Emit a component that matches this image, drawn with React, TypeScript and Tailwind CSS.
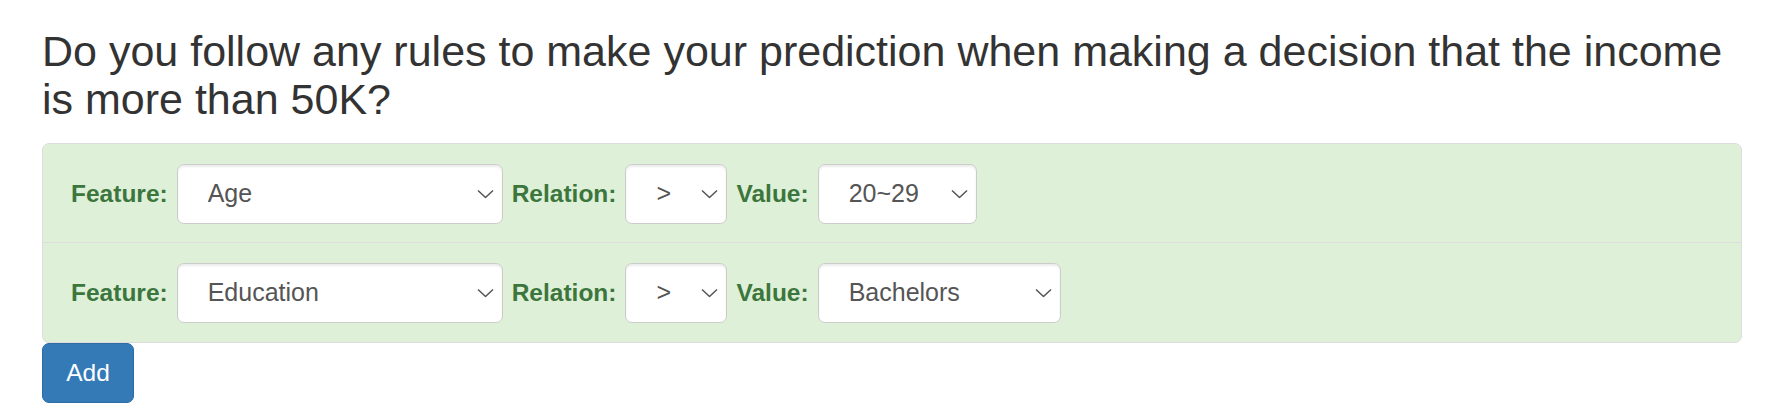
import React from 'react'

type Rule = {
  feature: string
  relation: string
  value: string
  valueWidth: string
}

const rules: Rule[] = [
  { feature: 'Age', relation: '>', value: '20~29', valueWidth: 'w-[159px]' },
  { feature: 'Education', relation: '>', value: 'Bachelors', valueWidth: 'w-[243px]' },
]

function Select({ value, className }: { value: string; className: string }) {
  return (
    <div className={`relative h-[60px] shrink-0 ${className}`}>
      <select
        defaultValue={value}
        className="h-full w-full appearance-none rounded-[7px] border border-[#ccc] bg-white pl-[30px] pr-[30px] text-[25px] text-[#555] shadow-[inset_0_2px_2px_rgba(0,0,0,0.075)] outline-none"
      >
        <option>{value}</option>
      </select>
      <svg
        className="pointer-events-none absolute right-[9px] top-1/2 -translate-y-1/2"
        width="17"
        height="9"
        viewBox="0 0 17 9"
      >
        <polyline points="1,1 8.5,8 16,1" fill="none" stroke="#555" strokeWidth="1.5" />
      </svg>
    </div>
  )
}

function Label({ children }: { children: React.ReactNode }) {
  return <label className="shrink-0 text-[24.5px] font-bold text-[#3c763d]">{children}</label>
}

export default function App() {
  return (
    <div className="min-h-screen bg-white pl-[42px] pr-[40px] font-['Liberation_Sans',Arial,sans-serif]">
      <h3 className="pt-[27px] pb-[20px] text-[43px] leading-[48px] font-normal text-[#333]">
        Do you follow any rules to make your prediction when making a decision that the income is more than 50K?
      </h3>

      <div className="rounded-[7px] border border-[#ddd] bg-[#dff0d8]">
        {rules.map((rule, i) => (
          <div
            key={i}
            className={`flex items-center gap-[9px] pl-[28px] ${
              i === 0 ? 'pt-[20px] pb-[18px]' : 'border-t border-[#ddd] pt-[20px] pb-[19px]'
            }`}
          >
            <Label>Feature:</Label>
            <Select value={rule.feature} className="w-[326px]" />
            <Label>Relation:</Label>
            <Select value={rule.relation} className="w-[102px]" />
            <Label>Value:</Label>
            <Select value={rule.value} className={rule.valueWidth} />
          </div>
        ))}
      </div>

      <button className="h-[60px] w-[92px] rounded-[7px] border border-[#2e6da4] bg-[#337ab7] text-[24.5px] text-white">
        Add
      </button>
    </div>
  )
}
